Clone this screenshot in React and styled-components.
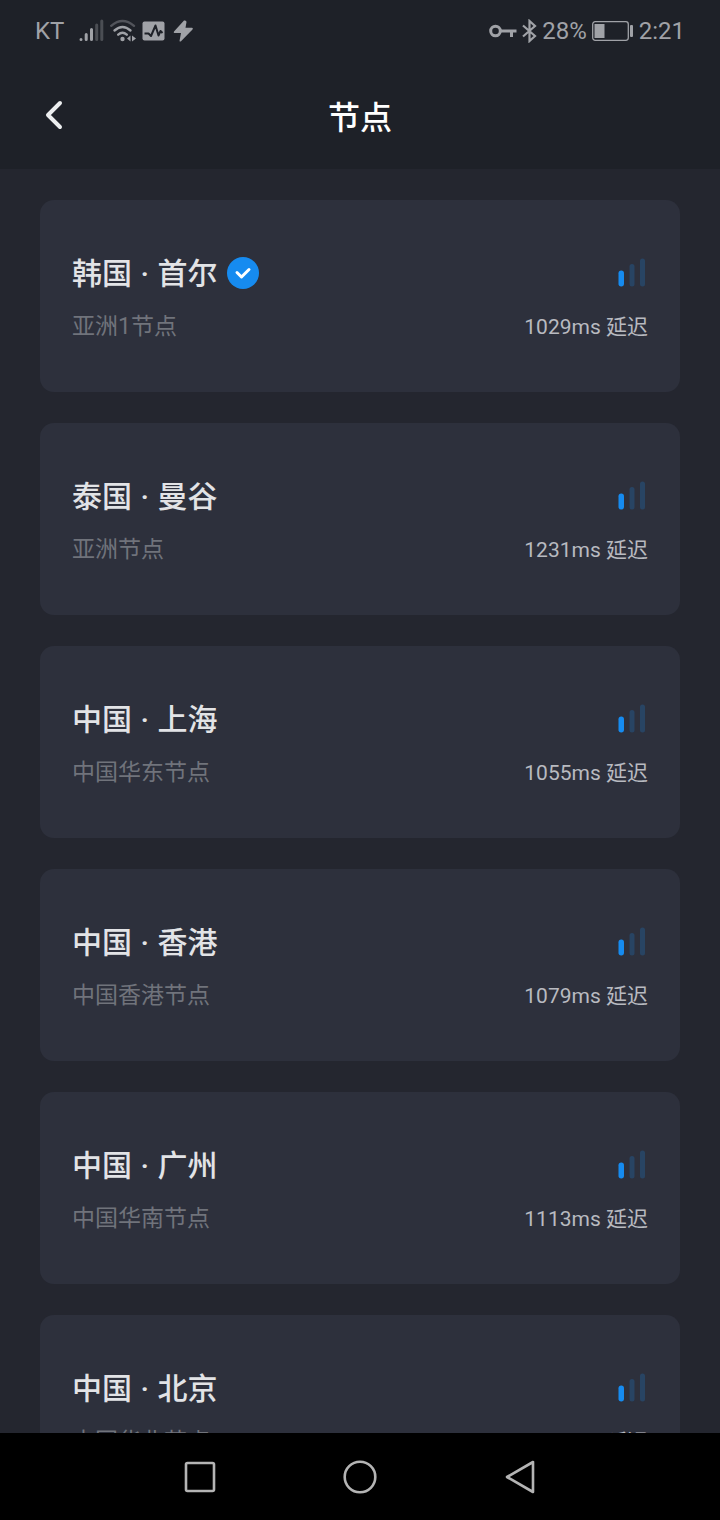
import React from "react";
import styled, { createGlobalStyle } from "styled-components";

const GlobalStyle = createGlobalStyle`
    * {
        box-sizing: border-box;
    }
    body {
        margin: 0;
        background: #24262f;
        font-family: Roboto, "Noto Sans CJK SC", sans-serif;
    }
`

const Screen = styled.div`
    display: flex;
    flex-direction: column;
    height: 100vh;
    overflow: hidden;
`

const Top = styled.header`
    flex-shrink: 0;
    background: #1e2128;
`

const StatusBar = styled.div`
    display: flex;
    justify-content: space-between;
    align-items: center;
    height: 62px;
    padding: 0 35px;
    font-size: 24px;
    line-height: 32px;
    color: #a0a2a7;
`

const StatusGroup = styled.div`
    display: flex;
    align-items: center;
    gap: ${props => props.$gap}px;

    svg {
        display: block;
        flex-shrink: 0;
    }
`

const Carrier = styled.span`
    margin-right: 9px;
`

const TitleBar = styled.div`
    display: grid;
    grid-template-columns: 40px 1fr 40px;
    align-items: center;
    height: 107px;
    padding: 0 34px;
`

const BackButton = styled.button`
    display: flex;
    align-items: center;
    justify-content: center;
    height: 48px;
    padding: 0;
    border: 0;
    background: none;
    color: #eceeef;
    cursor: pointer;
`

const PageTitle = styled.h1`
    margin: 0;
    padding-top: 4px;
    text-align: center;
    font-size: 32px;
    font-weight: 500;
    line-height: 44px;
    color: #ffffff;
`

const NodeList = styled.ul`
    flex: 1;
    min-height: 0;
    display: flex;
    flex-direction: column;
    gap: 31px;
    margin: 0;
    padding: 31px 40px;
    list-style: none;
    overflow-y: auto;
    scrollbar-width: none;
`

const Card = styled.li`
    flex-shrink: 0;
    display: flex;
    flex-direction: column;
    gap: 14px;
    padding: 52px 32px 48px;
    border-radius: 14px;
    background: #2d303c;
`

const Row = styled.div`
    display: flex;
    align-items: center;
    justify-content: space-between;
`

const NodeName = styled.h2`
    display: flex;
    align-items: center;
    gap: 10px;
    margin: 0;
    font-size: 30px;
    font-weight: 500;
    line-height: 44px;
    color: #e2e3e6;
`

const Dot = styled.span`
    margin: 0 1px;
`

const Region = styled.span`
    font-size: 23px;
    line-height: 34px;
    color: #70737b;
`

const Latency = styled.span`
    font-size: 21px;
    line-height: 34px;
    color: #b8bac0;
`

const NavBar = styled.nav`
    flex-shrink: 0;
    display: flex;
    align-items: center;
    justify-content: center;
    gap: 120px;
    height: 87px;
    background: #000000;
`

const NavButton = styled.button`
    display: flex;
    align-items: center;
    justify-content: center;
    width: 40px;
    height: 40px;
    padding: 0;
    border: 0;
    background: none;
    color: #b4b4b4;
    cursor: pointer;
`

const nodes = [
    { country: "韩国", city: "首尔", region: "亚洲1节点", latency: 1029, selected: true },
    { country: "泰国", city: "曼谷", region: "亚洲节点", latency: 1231 },
    { country: "中国", city: "上海", region: "中国华东节点", latency: 1055 },
    { country: "中国", city: "香港", region: "中国香港节点", latency: 1079 },
    { country: "中国", city: "广州", region: "中国华南节点", latency: 1113 },
    { country: "中国", city: "北京", region: "中国华北节点", latency: 1130 },
]

const CellSignal = () => (
    <svg width="25" height="24" viewBox="0 0 25 24" fill="none" stroke="currentColor" strokeWidth="3" strokeLinecap="round">
        <path d="M2 20.5v.1M7.2 15.5v5M12.5 10.5v10" />
        <path d="M17.7 6v14.5M22.8 2v18.5" opacity="0.35" />
    </svg>
)

const Wifi = () => (
    <svg width="26" height="24" viewBox="0 0 26 24" fill="none" stroke="currentColor" strokeWidth="2.4" strokeLinecap="round">
        <path d="M1.2 6.8Q12.5-2.8 24 6.8" opacity="0.4" />
        <path d="M4.5 11.5Q12.5 4.5 20.5 11.5M8.2 15.7Q12.5 12 16.8 15.7" />
        <circle cx="12.5" cy="20" r="2.2" fill="currentColor" stroke="none" />
        <path d="M20.5 16.5v6l-3.5-3zM22 16.5v6l4-3z" fill="currentColor" stroke="none" />
    </svg>
)

const Monitor = () => (
    <svg width="23" height="20" viewBox="0 0 23 20" fill="none">
        <rect x="0.5" y="0.5" width="22" height="19" rx="2" fill="currentColor" />
        <path d="M2.5 12.5h4L9 15l4.500-10.500 3 10 2-4.500 2 2" stroke="#1e2128" strokeWidth="2" strokeLinejoin="round" />
    </svg>
)

const Bolt = () => (
    <svg width="23" height="22" viewBox="-2 0 23 22" fill="currentColor">
        <path d="M11 .5 1 11.5q-.8 1.500.5 1.500H8L6.500 21q.5 1 1.500.3L19.500 9.500q1-1.500-.5-1.800h-6.500L13.500 2q0-2-2.500-1.500z" />
    </svg>
)

const KeyIcon = () => (
    <svg width="28" height="14" viewBox="0 0 28 14" fill="none" stroke="currentColor" strokeWidth="3">
        <circle cx="6.5" cy="7" r="4.8" />
        <path d="M11 7h16.5M22.5 7v6" />
    </svg>
)

const Bluetooth = () => (
    <svg width="15" height="24" viewBox="0 0 15 24" fill="none" stroke="currentColor" strokeWidth="2.2">
        <path d="M1 6.5 13 17l-5.5 5V2L13 7 1 17.5" />
    </svg>
)

const Battery = () => (
    <svg width="42" height="20" viewBox="0 0 42 20" fill="none">
        <rect x="0.7" y="0.7" width="35.6" height="18.6" rx="2.5" stroke="currentColor" strokeWidth="1.3" />
        <rect x="2.5" y="3" width="10" height="14" fill="currentColor" />
        <rect x="38" y="4" width="3" height="12" rx="1" fill="currentColor" />
    </svg>
)

const Check = () => (
    <svg width="32" height="34" viewBox="0 0 32 34" fill="none" role="img" aria-label="已选择">
        <circle cx="16" cy="16" r="16" fill="#168bf0" />
        <path d="m10 15.5 4.5 4.500 7.500-7.500" stroke="#ffffff" strokeWidth="3" strokeLinecap="round" strokeLinejoin="round" />
    </svg>
)

const Strength = () => (
    <svg width="30" height="32" viewBox="0 0 30 32" fill="#168bf0" aria-hidden="true">
        <rect x="0.5" y="12.5" width="5.5" height="16" rx="2.7" />
        <rect x="11.5" y="6" width="5" height="22.5" rx="2.5" opacity="0.22" />
        <rect x="22" y="0.5" width="5" height="28" rx="2.5" opacity="0.22" />
    </svg>
)

const NodeCard = props => (
    <Card>
        <Row>
            <NodeName>
                <span>{props.country} <Dot>·</Dot> {props.city}</span>
                {props.selected && <Check />}
            </NodeName>
            <Strength />
        </Row>
        <Row>
            <Region>{props.region}</Region>
            <Latency>{props.latency}ms 延迟</Latency>
        </Row>
    </Card>
)

const App = () => (
    <Screen>
        <GlobalStyle />
        <Top>
            <StatusBar>
                <StatusGroup $gap={6}>
                    <Carrier>KT</Carrier>
                    <CellSignal />
                    <Wifi />
                    <Monitor />
                    <Bolt />
                </StatusGroup>
                <StatusGroup $gap={5}>
                    <KeyIcon />
                    <Bluetooth />
                    <span>28%</span>
                    <Battery />
                    <span>2:21</span>
                </StatusGroup>
            </StatusBar>
            <TitleBar>
                <BackButton type="button" aria-label="返回">
                    <svg width="20" height="32" viewBox="0 0 20 32" fill="none" stroke="currentColor" strokeWidth="4" strokeLinecap="round" strokeLinejoin="round">
                        <path d="M16 3 4 15l12 12" />
                    </svg>
                </BackButton>
                <PageTitle>节点</PageTitle>
            </TitleBar>
        </Top>
        <NodeList>
            {nodes.map(node => <NodeCard key={node.city} {...node} />)}
        </NodeList>
        <NavBar>
            <NavButton type="button" aria-label="最近任务">
                <svg width="34" height="34" viewBox="0 0 34 34" fill="none" stroke="currentColor" strokeWidth="2.6">
                    <rect x="3" y="3" width="28" height="28" rx="1.5" />
                </svg>
            </NavButton>
            <NavButton type="button" aria-label="主页">
                <svg width="34" height="34" viewBox="0 0 34 34" fill="none" stroke="currentColor" strokeWidth="2.6">
                    <circle cx="17" cy="17" r="15.3" />
                </svg>
            </NavButton>
            <NavButton type="button" aria-label="返回上一页">
                <svg width="34" height="34" viewBox="0 0 34 34" fill="none" stroke="currentColor" strokeWidth="2.6" strokeLinejoin="round">
                    <path d="M30 2v30L4 17z" />
                </svg>
            </NavButton>
        </NavBar>
    </Screen>
)

export default App;
